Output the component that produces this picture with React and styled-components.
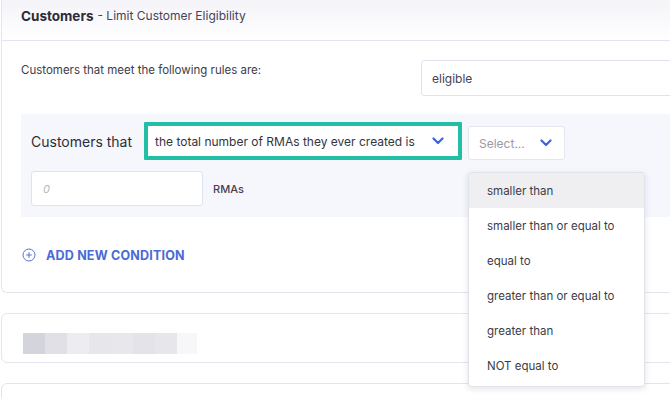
import React from 'react';
import styled, { createGlobalStyle } from 'styled-components';

const GlobalStyle = createGlobalStyle`
  html, body {
    margin: 0;
    padding: 0;
    background: #ffffff;
    overflow: hidden;
  }
  body {
    font-family: Inter, "Noto Sans", "Liberation Sans", sans-serif;
    color: #333340;
  }
`;

const Page = styled.div`
  width: 760px;
  padding-left: 1px;
  display: flex;
  flex-direction: column;
  gap: 20px;
`;

const Card = styled.div`
  border: 1px solid #e3e5ee;
  border-top: ${p => (p.$cutTop ? 'none' : '1px solid #e3e5ee')};
  border-radius: ${p => (p.$cutTop ? '0 0 6px 6px' : '6px')};
  background: #fff;
  min-height: ${p => p.$minHeight || 0}px;
`;

const CardHeader = styled.div`
  height: 41px;
  box-sizing: border-box;
  display: flex;
  align-items: center;
  padding: 0 0 9px 19px;
  border-bottom: 1px solid #e3e5ee;
  background: linear-gradient(180deg, #f4f4f9 0%, #ffffff 100%);
  font-size: 12px;
  color: #44445a;
`;

const HeaderTitle = styled.span`
  font-weight: 700;
  font-size: 13.5px;
  color: #2b2b3c;
  margin-right: 4px;
`;

const CardBody = styled.div`
  padding: 19px 0 29px 19px;
`;

const RuleRow = styled.div`
  display: flex;
  align-items: center;
  height: 36px;
`;

const RuleLabel = styled.div`
  width: 400px;
  font-size: 11.5px;
  color: #3c3c48;
  margin-top: -16px;
`;

const TextBox = styled.div`
  width: ${p => p.$width}px;
  height: ${p => p.$height || 36}px;
  box-sizing: border-box;
  border: 1px solid #e0e3ee;
  border-radius: 3px;
  background: #fff;
  display: flex;
  align-items: center;
  padding-left: ${p => p.$pad || 10}px;
  font-size: ${p => p.$size || 12}px;
  font-style: ${p => (p.$placeholder ? 'italic' : 'normal')};
  color: ${p => (p.$placeholder ? '#b8b8c4' : '#4a3e52')};
`;

const ConditionBox = styled.div`
  margin-top: 18px;
  background: #f5f7fd;
  padding: 8px 10px 11px 10px;
  display: flex;
  flex-direction: column;
  gap: 11px;
`;

const ConditionRow = styled.div`
  display: flex;
  align-items: center;
  gap: ${p => p.$gap || 0}px;
`;

const ConditionLabel = styled.div`
  font-size: 14px;
  color: #2e2e38;
  width: 113px;
`;

const SelectBox = styled.div`
  position: relative;
  box-sizing: border-box;
  width: ${p => p.$width}px;
  height: ${p => p.$height}px;
  background: #fff;
  border: ${p => (p.$focused ? '4px solid #22bfa6' : '1px solid #e4e6ef')};
  border-radius: ${p => (p.$focused ? '1px' : '3px')};
  display: flex;
  align-items: center;
  justify-content: space-between;
  padding: 0 ${p => (p.$focused ? 14 : 12)}px 0 ${p => (p.$focused ? 7 : 10)}px;
  font-size: 12px;
  color: ${p => (p.$muted ? '#9a9aa6' : '#34343e')};
  margin-left: ${p => p.$offset || 0}px;
  margin-top: ${p => p.$drop || 0}px;
`;

const Chevron = () => (
  <svg width="12" height="8" viewBox="0 0 12 8" fill="none">
    <path d="M1.5 1.5 L6 6 L10.5 1.5" stroke="#3d63dd" strokeWidth="2.2" strokeLinecap="round" strokeLinejoin="round" />
  </svg>
);

const Menu = styled.div`
  position: absolute;
  top: 45px;
  left: -1px;
  width: 175px;
  background: #fff;
  border: 1px solid #e2e3ea;
  border-radius: 3px;
  box-shadow: 0 2px 6px rgba(30, 30, 60, 0.12);
  padding: 0 0 3px 0;
  z-index: 5;
`;

const MenuItem = styled.div`
  height: 35px;
  display: flex;
  align-items: center;
  padding-left: 18px;
  font-size: 11.5px;
  color: #3c3c46;
  background: ${p => (p.$active ? '#efeff2' : '#fff')};
`;

const UnitLabel = styled.span`
  font-size: 11px;
  color: #4a3e52;
  font-weight: 500;
`;

const AddButton = styled.div`
  margin-top: 30px;
  margin-left: 1px;
  height: 16px;
  display: flex;
  align-items: center;
  gap: 10px;
  font-size: 12.5px;
  font-weight: 700;
  color: #4a6ad6;
  letter-spacing: 0.2px;
`;

const RedactedRow = styled.div`
  display: flex;
  padding: 19px 0 0 21px;
`;

const Pixel = styled.div`
  width: ${p => p.$w}px;
  height: 21px;
  background: ${p => p.$c};
`;

const operators = [
  'smaller than',
  'smaller than or equal to',
  'equal to',
  'greater than or equal to',
  'greater than',
  'NOT equal to',
];

const pixels = [
  ['#d4d4dc', 22],
  ['#e0e0e6', 22],
  ['#ededf1', 22],
  ['#e6e6eb', 22],
  ['#e8e8ec', 22],
  ['#e3e3e9', 22],
  ['#e6e6eb', 22],
  ['#f7f7f9', 20],
];

const App = () => (
  <>
    <GlobalStyle />
    <Page>
      <Card $cutTop>
        <CardHeader>
          <HeaderTitle>Customers</HeaderTitle> - Limit Customer Eligibility
        </CardHeader>
        <CardBody>
          <RuleRow>
            <RuleLabel>Customers that meet the following rules are:</RuleLabel>
            <TextBox $width={300}>eligible</TextBox>
          </RuleRow>
          <ConditionBox>
            <ConditionRow>
              <ConditionLabel>Customers that</ConditionLabel>
              <SelectBox $focused $width={318} $height={38}>
                <span>the total number of RMAs they ever created is</span>
                <Chevron />
              </SelectBox>
              <SelectBox $muted $width={97} $height={34} $offset={6} $drop={4}>
                <span>Select...</span>
                <Chevron />
                <Menu>
                  {operators.map((op, i) => (
                    <MenuItem key={op} $active={i === 0}>{op}</MenuItem>
                  ))}
                </Menu>
              </SelectBox>
            </ConditionRow>
            <ConditionRow $gap={10}>
              <TextBox $width={172} $height={35} $pad={11} $size={11} $placeholder>0</TextBox>
              <UnitLabel>RMAs</UnitLabel>
            </ConditionRow>
          </ConditionBox>
          <AddButton>
            <svg width="14" height="14" viewBox="0 0 14 14" fill="none">
              <circle cx="7" cy="7" r="6" stroke="#5a76d8" strokeWidth="1" />
              <path d="M7 4.2 V9.8 M4.2 7 H9.8" stroke="#5a76d8" strokeWidth="1.1" />
            </svg>
            ADD NEW CONDITION
          </AddButton>
        </CardBody>
      </Card>
      <Card $minHeight={48}>
        <RedactedRow>
          {pixels.map(([c, w], i) => (
            <Pixel key={i} $c={c} $w={w} />
          ))}
        </RedactedRow>
      </Card>
      <Card $minHeight={60} />
    </Page>
  </>
);

export default App;
